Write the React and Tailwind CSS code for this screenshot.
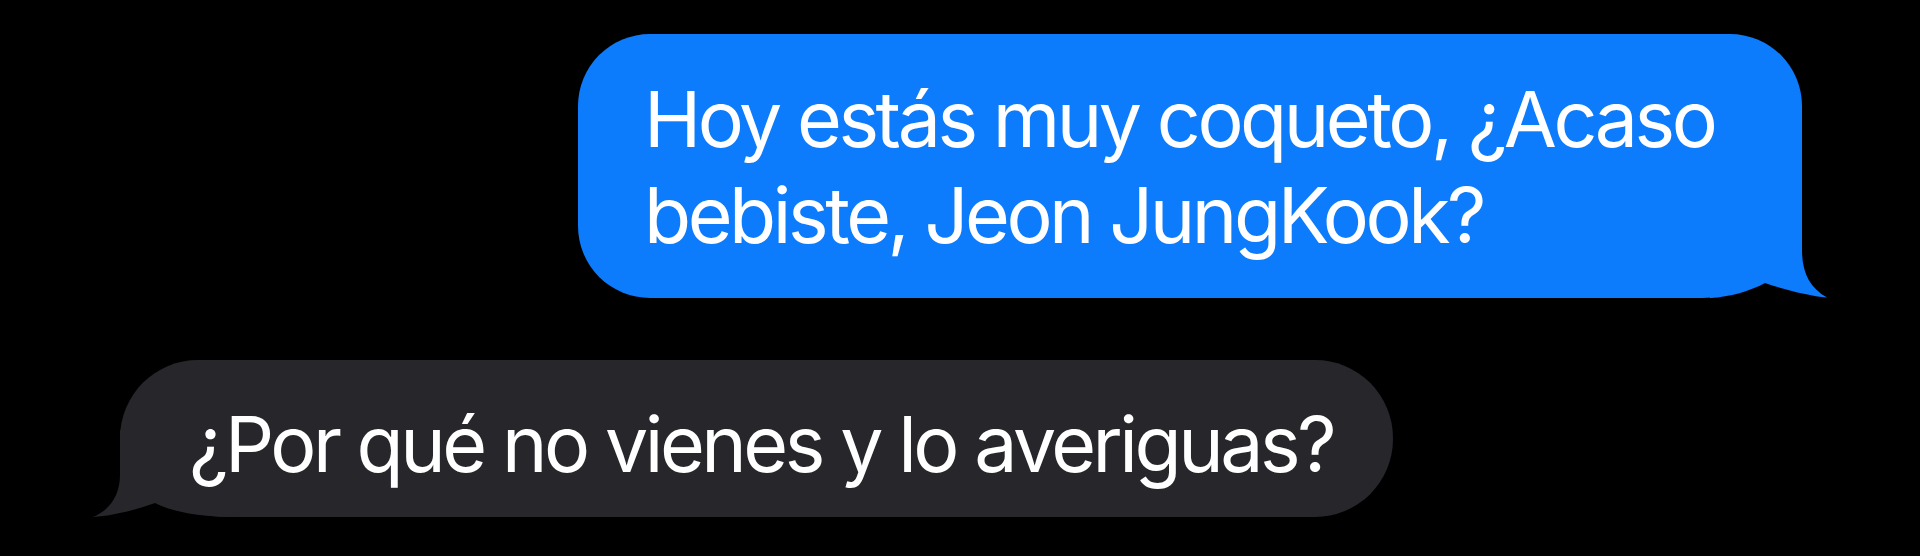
import React from 'react';

// iMessage-style conversation, two bubbles on black
export default function App() {
  return (
    <div
      className="h-[556px] w-full overflow-hidden bg-black flex flex-col text-white"
      style={{ fontFamily: 'Inter, "Noto Sans", sans-serif' }}
    >
      {/* Sent bubble */}
      <div className="flex justify-end pt-[34px] pr-[118px]">
        <div className="relative w-[1224px] h-[264px] bg-[#0c7bfc] rounded-[72px] rounded-br-[100px] pl-[66px] pt-[37px] text-[77px] leading-[96px] tracking-[-0.045em] whitespace-nowrap">
          <svg className="absolute bottom-0 -right-[28px] w-[120px] h-[112px]" viewBox="0 0 120 112">
            <path
              d="M0,0 H92 V64 C92,87 100,102 117,111.5 C100,110 75,104 55,97 C40,105 20,111 0,112 Z"
              fill="#0c7bfc"
            />
          </svg>
          <p className="relative">
            Hoy estás muy coqueto, ¿Acaso
            <br />
            bebiste, Jeon JungKook?
          </p>
        </div>
      </div>

      {/* Received bubble */}
      <div className="mt-[62px] pl-[120px]">
        <div className="relative w-[1273px] h-[157px] bg-[#27262b] rounded-[78px] rounded-bl-[110px_79px] pl-[69px] pt-[36px] text-[77px] leading-[96px] tracking-[-0.045em] whitespace-nowrap">
          <svg className="absolute bottom-0 -left-[32px] w-[152px] h-[87px]" viewBox="0 0 152 87">
            <path
              d="M152,0 H32 V45 C32,65 22,80 5,87 C22,86 45,81 67,73 C85,82 110,87 152,87 Z"
              fill="#27262b"
            />
          </svg>
          <p className="relative">¿Por qué no vienes y lo averiguas?</p>
        </div>
      </div>
    </div>
  );
}
